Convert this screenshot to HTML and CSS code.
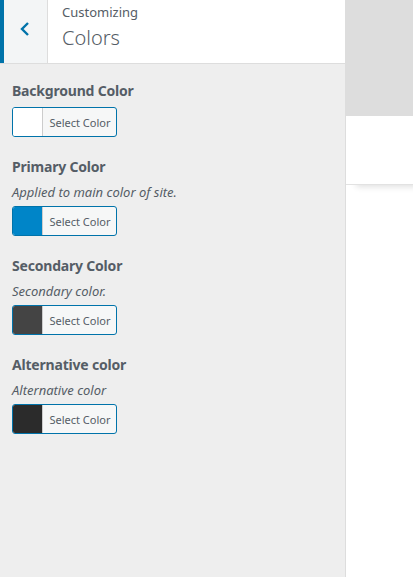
FILE: index.html
```html
<!DOCTYPE html>
<html>
<head>
<meta charset="utf-8">
<link rel="stylesheet" href="styles.css">
</head>
<body>
<div class="layout">
  <aside class="sidebar">
    <header class="header">
      <button class="back" aria-label="Back">
        <svg width="12" height="16" viewBox="0 0 12 16"><path d="M9 2 L3 8 L9 14" fill="none" stroke="#0073aa" stroke-width="2.4"/></svg>
      </button>
      <div class="title">
        <span class="crumb">Customizing</span>
        <span class="name">Colors</span>
      </div>
    </header>
    <div class="controls">
      <div class="control">
        <div class="label">Background Color</div>
        <button class="picker"><span class="swatch sw-white"></span><span class="pick-text">Select Color</span></button>
      </div>
      <div class="control">
        <div class="label">Primary Color</div>
        <div class="desc">Applied to main color of site.</div>
        <button class="picker"><span class="swatch sw-blue"></span><span class="pick-text">Select Color</span></button>
      </div>
      <div class="control">
        <div class="label">Secondary Color</div>
        <div class="desc">Secondary color.</div>
        <button class="picker"><span class="swatch sw-gray"></span><span class="pick-text">Select Color</span></button>
      </div>
      <div class="control">
        <div class="label">Alternative color</div>
        <div class="desc">Alternative color</div>
        <button class="picker"><span class="swatch sw-dark"></span><span class="pick-text">Select Color</span></button>
      </div>
    </div>
  </aside>
  <main class="preview">
    <div class="preview-top"></div>
    <div class="preview-card"></div>
  </main>
</div>
</body>
</html>
```

FILE: styles.css
```css
* { box-sizing: border-box; }
html, body { margin: 0; padding: 0; height: 100%; }
body {
  font-family: "Noto Sans", "Open Sans", sans-serif;
  color: #555d66;
  background: #fff;
  overflow: hidden;
}
.layout { display: flex; height: 577px; }
.sidebar {
  width: 346px;
  flex: none;
  background: #eee;
  border-right: 1px solid #ddd;
  display: flex;
  flex-direction: column;
}
.header {
  height: 64px;
  background: #fff;
  border-bottom: 1px solid #ddd;
  display: flex;
}
.back {
  width: 48px;
  height: 63px;
  border: none;
  border-left: 4px solid #0073aa;
  border-right: 1px solid #ddd;
  background: #f3f5f6;
  padding: 0;
  margin: 0;
  display: flex;
  align-items: center;
  justify-content: center;
  cursor: pointer;
}
.back svg { margin-left: -2px; margin-top: -5px; }
.title {
  padding: 4px 0 0 14px;
  display: flex;
  flex-direction: column;
}
.crumb { font-size: 13px; line-height: 17px; color: #555d66; }
.name { font-size: 20px; line-height: 28px; font-weight: 300; color: #555d66; margin-top: 3px; }
.controls { padding: 17px 12px 0 12px; display: flex; flex-direction: column; gap: 20px; }
.control { display: flex; flex-direction: column; }
.label { font-size: 14px; font-weight: 700; line-height: 20px; margin-bottom: 6px; letter-spacing: -0.2px; }
.desc { font-size: 13px; font-style: italic; line-height: 18px; margin-top: 0; margin-bottom: 5px; }
.picker {
  width: 105px;
  height: 30px;
  border: 1px solid #0073aa;
  border-radius: 3px;
  background: #f6f7f7;
  padding: 0;
  display: flex;
  align-items: stretch;
  overflow: hidden;
  font-family: inherit;
  cursor: pointer;
}
.swatch { width: 30px; flex: none; border-right: 1px solid #ccc; }
.sw-white { background: #fff; }
.sw-blue { background: #0085c8; }
.sw-gray { background: #444; }
.sw-dark { background: #2b2b2b; }
.pick-text {
  flex: 1;
  font-size: 11px;
  color: #555d66;
  display: flex;
  align-items: center;
  justify-content: center;
  padding-left: 1px;
}
.preview { flex: 1; background: #fff; }
.preview-top { height: 116px; background: #ddd; }
.preview-card {
  height: 69px;
  background: #fff;
  border-bottom: 1px solid #e2e2e2;
  box-shadow: 8px 4px 6px -2px rgba(0,0,0,0.12);
}
```
